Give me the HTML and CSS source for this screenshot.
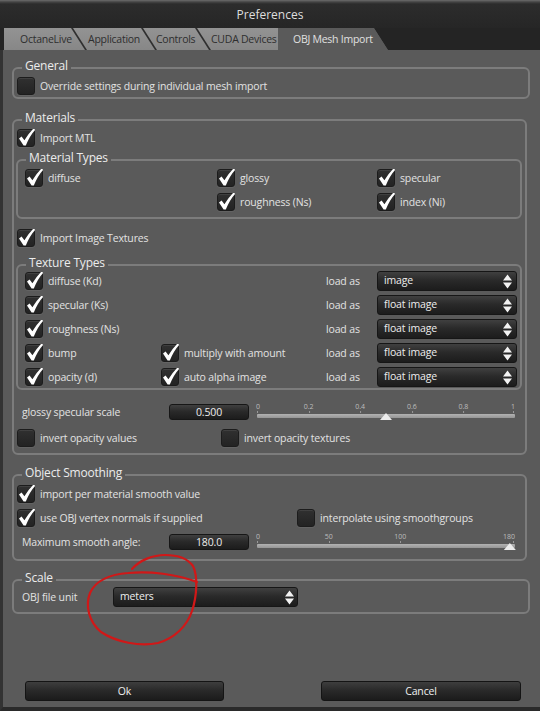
FILE: index.html
```html
<!DOCTYPE html>
<html>
<head>
<meta charset="utf-8">
<title>Preferences</title>
<link rel="stylesheet" href="styles.css">
</head>
<body>
<svg class="defs" width="0" height="0">
  <defs>
    <symbol id="chk" viewBox="0 0 18 18">
      <path d="M2 9.6 L4.6 7.4 L7.4 11.2 Q11.5 4.5 16.6 -0.6 L18.2 0.8 Q12.6 7 8.8 16.6 L6.6 16.6 Z" fill="#ffffff"/>
    </symbol>
    <symbol id="arr" viewBox="0 0 9 15">
      <path d="M0 6.5 L4.5 0.5 L9 6.5 Z M0 8.5 L9 8.5 L4.5 14.5 Z" fill="#f2f2f2"/>
    </symbol>
  </defs>
</svg>
<div class="window">
  <div class="titlebar">Preferences</div>
  <div class="tabbar">
    <div class="tab t1"><div class="tab-inner">OctaneLive</div></div>
    <div class="tab t2"><div class="tab-inner">Application</div></div>
    <div class="tab t3"><div class="tab-inner">Controls</div></div>
    <div class="tab t4"><div class="tab-inner">CUDA Devices</div></div>
    <div class="tab active"><div class="tab-inner">OBJ Mesh Import</div></div>
  </div>
  <div class="content">
    <fieldset class="group g-general">
      <legend>General</legend>
      <div class="check"><span class="box"></span><span>Override settings during individual mesh import</span></div>
    </fieldset>

    <fieldset class="group g-materials">
      <legend>Materials</legend>
      <div class="check"><span class="box"><svg class="tick"><use href="#chk"/></svg></span><span>Import MTL</span></div>
      <fieldset class="sub g-mattypes">
        <legend>Material Types</legend>
        <div class="mat-grid">
          <div class="check"><span class="box"><svg class="tick"><use href="#chk"/></svg></span><span>diffuse</span></div>
          <div class="check"><span class="box"><svg class="tick"><use href="#chk"/></svg></span><span>glossy</span></div>
          <div class="check"><span class="box"><svg class="tick"><use href="#chk"/></svg></span><span>specular</span></div>
          <div></div>
          <div class="check"><span class="box"><svg class="tick"><use href="#chk"/></svg></span><span>roughness (Ns)</span></div>
          <div class="check"><span class="box"><svg class="tick"><use href="#chk"/></svg></span><span>index (Ni)</span></div>
        </div>
      </fieldset>
      <div class="check imgtex"><span class="box"><svg class="tick"><use href="#chk"/></svg></span><span>Import Image Textures</span></div>
      <fieldset class="sub g-textypes">
        <legend>Texture Types</legend>
        <div class="tex-grid">
          <div class="check"><span class="box"><svg class="tick"><use href="#chk"/></svg></span><span>diffuse (Kd)</span></div>
          <div></div>
          <div class="loadas">load as</div>
          <div class="select"><span>image</span><svg class="arrows"><use href="#arr"/></svg></div>

          <div class="check"><span class="box"><svg class="tick"><use href="#chk"/></svg></span><span>specular (Ks)</span></div>
          <div></div>
          <div class="loadas">load as</div>
          <div class="select"><span>float image</span><svg class="arrows"><use href="#arr"/></svg></div>

          <div class="check"><span class="box"><svg class="tick"><use href="#chk"/></svg></span><span>roughness (Ns)</span></div>
          <div></div>
          <div class="loadas">load as</div>
          <div class="select"><span>float image</span><svg class="arrows"><use href="#arr"/></svg></div>

          <div class="check"><span class="box"><svg class="tick"><use href="#chk"/></svg></span><span>bump</span></div>
          <div class="check"><span class="box"><svg class="tick"><use href="#chk"/></svg></span><span>multiply with amount</span></div>
          <div class="loadas">load as</div>
          <div class="select"><span>float image</span><svg class="arrows"><use href="#arr"/></svg></div>

          <div class="check"><span class="box"><svg class="tick"><use href="#chk"/></svg></span><span>opacity (d)</span></div>
          <div class="check"><span class="box"><svg class="tick"><use href="#chk"/></svg></span><span>auto alpha image</span></div>
          <div class="loadas">load as</div>
          <div class="select"><span>float image</span><svg class="arrows"><use href="#arr"/></svg></div>
        </div>
      </fieldset>
      <div class="param-row glossy-row">
        <span class="param-label">glossy specular scale</span>
        <div class="spin">0.500</div>
        <div class="slider">
          <span class="mark first" style="left:0%">0</span>
          <span class="mark" style="left:20%">0.2</span>
          <span class="mark" style="left:40%">0.4</span>
          <span class="mark" style="left:60%">0.6</span>
          <span class="mark" style="left:80%">0.8</span>
          <span class="mark last" style="left:100%">1</span>
          <div class="track"></div>
          <div class="thumb" style="left:50%"></div>
        </div>
      </div>
      <div class="two-checks invert-row">
        <div class="check col-a"><span class="box"></span><span>invert opacity values</span></div>
        <div class="check"><span class="box"></span><span>invert opacity textures</span></div>
      </div>
    </fieldset>

    <fieldset class="group g-smooth">
      <legend>Object Smoothing</legend>
      <div class="check sm1"><span class="box"><svg class="tick"><use href="#chk"/></svg></span><span>import per material smooth value</span></div>
      <div class="two-checks sm2">
        <div class="check col-b"><span class="box"><svg class="tick"><use href="#chk"/></svg></span><span>use OBJ vertex normals if supplied</span></div>
        <div class="check"><span class="box"></span><span>interpolate using smoothgroups</span></div>
      </div>
      <div class="param-row angle-row">
        <span class="param-label">Maximum smooth angle:</span>
        <div class="spin">180.0</div>
        <div class="slider">
          <span class="mark first" style="left:0%">0</span>
          <span class="mark" style="left:27.78%">50</span>
          <span class="mark" style="left:55.56%">100</span>
          <span class="mark last" style="left:100%">180</span>
          <div class="track"></div>
          <div class="thumb" style="left:98%"></div>
        </div>
      </div>
    </fieldset>

    <fieldset class="group g-scale">
      <legend>Scale</legend>
      <div class="scale-row">
        <span class="param-label unit-label">OBJ file unit</span>
        <div class="select unit-select"><span>meters</span><svg class="arrows"><use href="#arr"/></svg></div>
      </div>
    </fieldset>

    <div class="buttons">
      <div class="btn ok">Ok</div>
      <div class="btn cancel">Cancel</div>
    </div>
  </div>
  <svg class="annotation" viewBox="0 0 540 711" width="540" height="711">
    <path d="M132 569 C140 560 153 555 165 555 C178 555 188 559 193 566 C198 576 197 596 192 611 C187 626 175 638 158 643 C140 647 116 642 101 632 C89 622 85 606 90 593 C95 581 110 574 128 573 C150 571 176 574 197 582" fill="none" stroke="#d01818" stroke-width="2.2" stroke-linecap="round"/>
  </svg>
</div>
</body>
</html>
```

FILE: styles.css
```css
* { box-sizing: border-box; }
html, body { margin: 0; padding: 0; }
body {
  background: #5a5a5a;
  font-family: "Open Sans", "Noto Sans", sans-serif;
  font-size: 10.5px;
  letter-spacing: -0.15px;
  color: #e2e2e2;
}
.defs { position: absolute; width: 0; height: 0; }
.window {
  position: relative;
  width: 540px;
  height: 711px;
  display: flex;
  flex-direction: column;
  background: #5a5a5a;
  overflow: hidden;
}
.titlebar {
  height: 28px;
  flex: none;
  background: linear-gradient(#6c6c6c 0, #444 2px, #2c2c2c 4px, #262626 100%);
  display: flex;
  align-items: center;
  justify-content: center;
  font-size: 12px;
  letter-spacing: 0;
  color: #dedede;
  padding-top: 1px;
}
.tabbar {
  height: 22px;
  flex: none;
  background: #242424;
  display: flex;
  align-items: stretch;
  padding-left: 4px;
}
.tab {
  position: relative;
  height: 100%;
  background: #2f2f2f;
  clip-path: polygon(0 0, calc(100% - 14px) 0, 100% 100%, 0 100%);
}
.tab-inner {
  height: 100%;
  margin-right: 2px;
  background: linear-gradient(#939393, #878787);
  clip-path: polygon(0 0, calc(100% - 14px) 0, 100% 100%, 0 100%);
  display: flex;
  align-items: center;
  padding-left: 15px;
  color: #2e2e2e;
  white-space: nowrap;
  overflow: hidden;
  font-size: 10.5px;
  letter-spacing: -0.25px;
}
.t1 { width: 83px; z-index: 5; }
.t1 .tab-inner { padding-left: 16px; }
.t2 { width: 84px; margin-left: -14px; z-index: 4; }
.t3 { width: 68px; margin-left: -14px; z-index: 3; }
.t3 .tab-inner { padding-left: 13px; }
.t4 { width: 100px; margin-left: -14px; z-index: 2; }
.t4 .tab-inner { padding-left: 14px; }
.tab.active { width: 110px; margin-left: -19px; z-index: 10; background: #5a5a5a; }
.tab.active .tab-inner { background: #5a5a5a; color: #e0e0e0; margin-right: 0; }

.content {
  flex: 1;
  display: flex;
  flex-direction: column;
  border-left: 3px solid #333;
  border-bottom: 4px solid #2a2a2a;
  padding: 9px 10px 6px 9px;
}

fieldset {
  margin: 0;
  min-width: 0;
  border: 2px solid #7c7c7c;
  border-radius: 6px;
  padding: 0 3px 2px 3px;
}
legend {
  font-size: 12px;
  letter-spacing: -0.2px;
  line-height: 14px;
  padding: 0 3px 4px 3px;
  margin-left: 5px;
  color: #ececec;
}
.g-general { padding-bottom: 2px; }
.g-materials { margin-top: 12px; margin-right: 3px; padding-bottom: 6px; }
.sub { margin-left: -1px; padding: 0 3px 6px 7px; }
.sub legend { margin-left: 1px; }
.g-mattypes { margin-top: 4px; }
.g-textypes { margin-top: 9px; padding-bottom: 1px; }
.g-smooth { margin-top: 11px; margin-right: 3px; padding-bottom: 9px; }
.g-scale { margin-top: 10px; padding-bottom: 5px; }

.check {
  display: flex;
  align-items: center;
  height: 18px;
  gap: 5px;
  white-space: nowrap;
}
.box {
  position: relative;
  flex: none;
  width: 18px;
  height: 18px;
  border-radius: 3px;
  background: linear-gradient(#303030, #232323);
  border: 1px solid #1c1c1c;
  box-shadow: inset 0 1px 0 rgba(255,255,255,0.08), 0 1px 0 rgba(255,255,255,0.06);
}
.tick {
  position: absolute;
  left: -1px;
  top: -1px;
  width: 18px;
  height: 18px;
  overflow: visible;
}

.mat-grid {
  display: grid;
  grid-template-columns: 192px 160px 1fr;
  grid-auto-rows: 18px;
  row-gap: 6px;
}
.imgtex { margin-top: 10px; }
.tex-grid {
  display: grid;
  grid-template-columns: 136px 165px 51px 140px;
  grid-auto-rows: 20px;
  row-gap: 4px;
  margin-top: -3px;
  align-items: center;
}
.loadas { white-space: nowrap; }

.select {
  display: flex;
  align-items: center;
  justify-content: space-between;
  height: 20px;
  padding: 0 4px 0 6px;
  border-radius: 3px;
  border: 1px solid #161616;
  background: linear-gradient(#404040 0%, #2a2a2a 45%, #1c1c1c 100%);
  color: #ededed;
  white-space: nowrap;
}
.select span { margin-top: -2px; }
.arrows { width: 9px; height: 15px; flex: none; }

.param-row {
  display: flex;
  align-items: center;
  height: 16px;
}
.param-label {
  flex: none;
  width: 152px;
  padding-left: 5px;
  white-space: nowrap;
}
.spin {
  flex: none;
  width: 80px;
  height: 16px;
  display: flex;
  align-items: center;
  justify-content: center;
  border-radius: 3px;
  border: 1px solid #161616;
  background: linear-gradient(#404040 0%, #2a2a2a 45%, #1c1c1c 100%);
  color: #ededed;
}
.slider {
  position: relative;
  flex: none;
  width: 258px;
  height: 16px;
  margin-left: 8px;
  padding-top: 10px;
}
.mark {
  position: absolute;
  top: -1px;
  font-size: 7px;
  letter-spacing: 0;
  line-height: 8px;
  color: #bdbdbd;
  transform: translateX(-50%);
}
.mark::after {
  content: "";
  position: absolute;
  left: 50%;
  top: 8px;
  width: 1px;
  height: 2px;
  background: #9a9a9a;
}
.mark.first { transform: translateX(-1px); }
.mark.first::after { left: 1px; }
.mark.last { transform: translateX(-100%); }
.mark.last::after { left: auto; right: 1px; }
.track {
  height: 4px;
  background: linear-gradient(#b2b2b2, #959595);
  border-radius: 1px;
}
.thumb {
  position: absolute;
  top: 9px;
  width: 12px;
  height: 7px;
  margin-left: -6px;
  background: #ececec;
  clip-path: polygon(50% 0, 100% 100%, 0 100%);
}

.glossy-row { margin-top: 14px; }
.two-checks { display: flex; align-items: center; }
.invert-row { margin-top: 9px; }
.col-a { width: 204px; }
.col-b { width: 280px; }
.sm1 { margin-top: 1px; }
.sm2 { margin-top: 6px; }
.angle-row { margin-top: 7px; }

.scale-row { display: flex; align-items: center; height: 20px; margin-top: -2px; }
.unit-label { width: 96px; }
.unit-select { width: 185px; padding-right: 3px; }

.buttons {
  margin-top: auto;
  display: flex;
  justify-content: space-between;
  padding: 0 9px 0 13px;
}
.btn {
  height: 20px;
  display: flex;
  align-items: center;
  justify-content: center;
  border-radius: 3px;
  border: 1px solid #141414;
  background: linear-gradient(#3e3e3e 0%, #2a2a2a 45%, #1b1b1b 100%);
  color: #f0f0f0;
}
.ok { width: 199px; }
.cancel { width: 200px; }

.annotation {
  position: absolute;
  left: 0;
  top: 0;
  pointer-events: none;
}
```
